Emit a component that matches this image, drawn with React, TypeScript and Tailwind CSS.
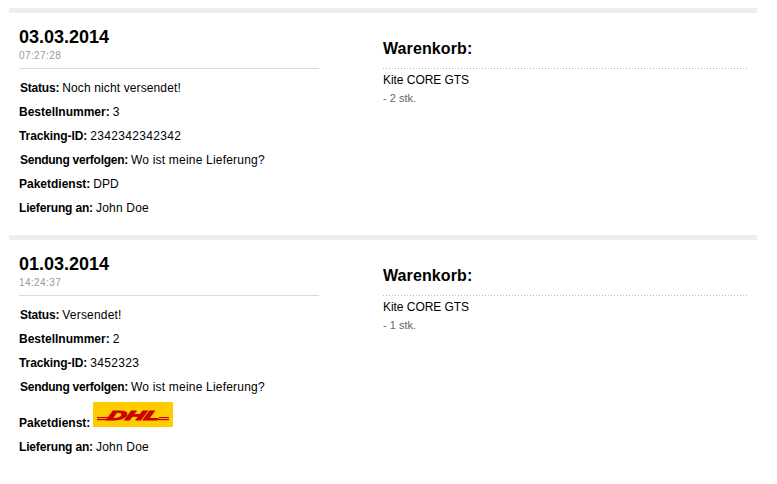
import type { ReactNode } from "react";

type Order = {
  date: string;
  time: string;
  status: string;
  statusSpacing: string;
  number: string;
  tracking: string;
  carrier: "DPD" | "DHL";
  quantity: number;
};

const orders: Order[] = [
  { date: "03.03.2014", time: "07:27:28", status: "Noch nicht versendet!", statusSpacing: "tracking-[0.12px]", number: "3", tracking: "2342342342342", carrier: "DPD", quantity: 2 },
  { date: "01.03.2014", time: "14:24:37", status: "Versendet!", statusSpacing: "tracking-[0.2px]", number: "2", tracking: "3452323", carrier: "DHL", quantity: 1 },
];

function DhlLogo() {
  return (
    <svg className="mb-2 h-[25px] w-20 shrink-0" viewBox="0 0 80 25" role="img" aria-label="DHL">
      <rect width="80" height="25" fill="#fc0" />
      <g fill="#c00">
        <rect x="4" y="15" width="11" height="1.2" />
        <rect x="4" y="17" width="10" height="1.2" />
        <rect x="66" y="15" width="10" height="1.2" />
        <rect x="65" y="17" width="11" height="1.2" />
        <text
          transform="translate(13.5 17.6) skewX(-20)"
          fontFamily="Liberation Sans, Arial, sans-serif"
          fontWeight="bold"
          fontStyle="italic"
          fontSize="13"
          textLength="52"
          lengthAdjust="spacingAndGlyphs"
          stroke="#c00"
          strokeWidth="1.2"
        >
          DHL
        </text>
      </g>
    </svg>
  );
}

type RowProps = { label: string; spacing?: string; children: ReactNode; tall?: boolean };

function Row({ label, spacing = "", children, tall = false }: RowProps) {
  return (
    <div className={`flex gap-[3px] whitespace-nowrap ${tall ? "h-9 items-end" : "h-6 items-center"}`}>
      <span className={`font-bold ${spacing} ${tall ? "leading-6" : ""}`}>{label}</span>
      {children}
    </div>
  );
}

function OrderCard({ order }: { order: Order }) {
  return (
    <section className="ml-[9px] flex h-[227px] w-[748px] border-t-5 border-[#eaeeed] pl-2.5">
      <div className="w-[300px]">
        <header className="h-14 border-b border-[#dadada] pt-3.5">
          <h2 className="text-[18px] leading-5 font-bold">{order.date}</h2>
          <p className="pt-px text-[10px] leading-4 tracking-[0.4px] text-[#999]">{order.time}</p>
        </header>
        <div className="pt-[7px]">
          <Row label="Status:" spacing="pl-px tracking-[-0.2px]"><span className={order.statusSpacing}>{order.status}</span></Row>
          <Row label="Bestellnummer:"><span>{order.number}</span></Row>
          <Row label="Tracking-ID:" spacing="tracking-[-0.1px]"><span className="tracking-[0.33px]">{order.tracking}</span></Row>
          <Row label="Sendung verfolgen:" spacing="pl-px tracking-[-0.26px]"><a className="tracking-[0.2px]">Wo ist meine Lieferung?</a></Row>
          <Row label="Paketdienst:" tall={order.carrier === "DHL"}>
            {order.carrier === "DHL" ? <DhlLogo /> : <span>DPD</span>}
          </Row>
          <Row label="Lieferung an:" spacing="tracking-[-0.16px]"><span className="tracking-[0.2px]">John Doe</span></Row>
        </div>
      </div>
      <div className="ml-16 w-[364px]">
        <h3 className="h-[55px] pt-[26px] text-[16px] leading-5 font-bold tracking-[0.1px]">Warenkorb:</h3>
        <div className="h-px bg-[repeating-linear-gradient(90deg,#b8b8b8_0_1px,transparent_1px_3px)]" />
        <p className="pt-px leading-5 tracking-[-0.05px]">Kite CORE GTS</p>
        <p className="-mt-px text-[11px] leading-[18px] text-[#666]">- {order.quantity} stk.</p>
      </div>
    </section>
  );
}

export default function App() {
  return (
    <main className="h-[484px] w-[777px] overflow-hidden bg-white pt-2 font-['Liberation_Sans',Arial,sans-serif] text-[12px] text-black">
      {orders.map((order) => <OrderCard key={order.number} order={order} />)}
    </main>
  );
}
